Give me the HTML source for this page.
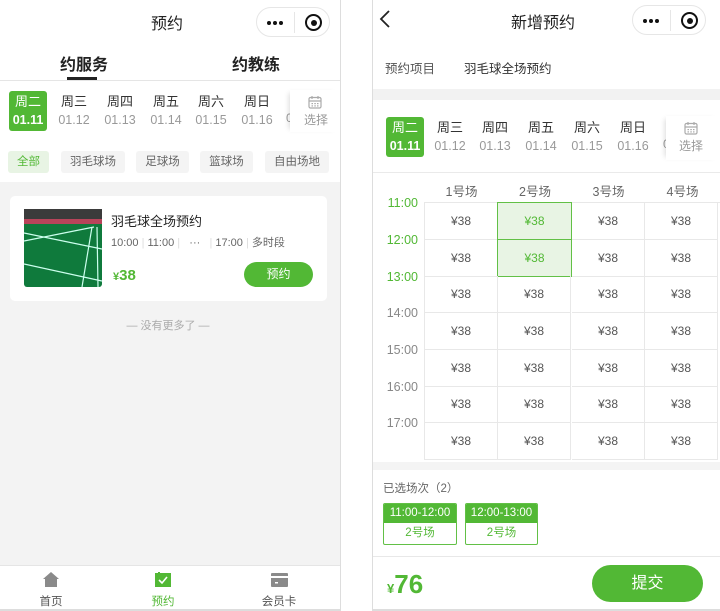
<!DOCTYPE html>
<html><head><meta charset="utf-8"><style>
*{margin:0;padding:0;box-sizing:border-box}
body{width:720px;height:611px;position:relative;background:#fff;font-family:"Liberation Sans","Noto Sans CJK SC",sans-serif;overflow:hidden;color:#333}
.a{position:absolute}
.c{text-align:center}
.cap{position:absolute;border:1px solid #e6e6e6;border-radius:16px;width:74px;height:30px;background:#fff}
.cap .dots{position:absolute;left:10px;top:13px;font-size:0}
.cap .dots i{display:inline-block;width:4px;height:4px;border-radius:2px;background:#111;margin-right:2px}
.cap .sep{position:absolute;left:37px;top:4px;width:1px;height:21px;background:#e6e6e6}
.cap .rec{position:absolute;left:48px;top:6px;width:17px;height:17px;border:2px solid #111;border-radius:50%}
.cap .rec:after{content:"";position:absolute;left:3.5px;top:3.5px;width:6px;height:6px;border-radius:50%;background:#111}
.day{position:absolute;width:38px;text-align:center;font-size:13px;color:#333;line-height:18px}
.day b{display:block;font-weight:normal;color:#999;font-size:12.5px}
.day.on{background:#52b835;color:#fff;border-radius:3px;padding:2px 0}
.day.on b{color:#fff;font-weight:bold}
.chip{position:absolute;top:151px;height:22px;line-height:22px;font-size:11.5px;color:#666;background:#f4f4f4;border-radius:3px;text-align:center}
.cell{position:absolute;width:73px;height:37px;line-height:37px;text-align:center;font-size:12px;color:#555;border-right:1px solid #e8e8e8;border-bottom:1px solid #e8e8e8}
.tm{position:absolute;left:376px;width:42px;text-align:right;font-size:12.5px;color:#888}
</style></head><body>
<!-- LEFT -->
<div class="a" style="left:340px;top:0;width:1px;height:611px;background:#ddd"></div>
<div class="a c" style="left:117px;top:10px;width:100px;font-size:16px;color:#222">预约</div>
<div class="cap" style="left:256px;top:7px"><div class="dots"><i></i><i></i><i></i></div><div class="sep"></div><div class="rec"></div></div>
<div class="a" style="left:60px;top:51px;font-size:16px;font-weight:bold;color:#222">约服务</div>
<div class="a" style="left:232px;top:51px;font-size:16px;font-weight:bold;color:#222">约教练</div>
<div class="a" style="left:67px;top:77px;width:30px;height:3px;background:#222"></div>
<div class="a" style="left:0;top:80px;width:340px;height:1px;background:#e5e5e5"></div>
<div class="day on" style="left:9px;top:91px">周二<b>01.11</b></div>
<div class="day" style="left:55px;top:93px">周三<b>01.12</b></div>
<div class="day" style="left:101px;top:93px">周四<b>01.13</b></div>
<div class="day" style="left:147px;top:93px">周五<b>01.14</b></div>
<div class="day" style="left:192px;top:93px">周六<b>01.15</b></div>
<div class="day" style="left:238px;top:93px">周日<b>01.16</b></div>
<div class="a" style="left:286px;top:111px;font-size:12px;color:#999">0</div>
<div class="a" style="left:290px;top:90px;width:50px;height:42px;background:#fff;box-shadow:-4px 0 5px -3px rgba(0,0,0,.15)"></div>
<svg class="a" style="left:308px;top:95px" width="14" height="14" viewBox="0 0 14 14"><rect x="1" y="2.5" width="12" height="10.5" rx="1.5" fill="none" stroke="#aaa" stroke-width="1.2"/><path d="M4 1v3M10 1v3M1 6h12" stroke="#aaa" stroke-width="1.2"/><g fill="#aaa"><rect x="3.5" y="8" width="1.5" height="1.2"/><rect x="6.3" y="8" width="1.5" height="1.2"/><rect x="9" y="8" width="1.5" height="1.2"/><rect x="3.5" y="10.3" width="1.5" height="1.2"/><rect x="6.3" y="10.3" width="1.5" height="1.2"/><rect x="9" y="10.3" width="1.5" height="1.2"/></g></svg>
<div class="a" style="left:304px;top:111px;font-size:12px;color:#999">选择</div>
<div class="chip" style="left:8px;width:41px;background:#e8f4e4;color:#52b835">全部</div>
<div class="chip" style="left:61px;width:64px">羽毛球场</div>
<div class="chip" style="left:136px;width:53px">足球场</div>
<div class="chip" style="left:200px;width:53px">篮球场</div>
<div class="chip" style="left:265px;width:64px">自由场地</div>
<div class="a" style="left:0;top:182px;width:340px;height:383px;background:#f3f3f3"></div>
<div class="a" style="left:10px;top:196px;width:317px;height:105px;background:#fff;border-radius:5px"></div>
<svg class="a" style="left:24px;top:209px" width="78" height="78" viewBox="0 0 78 78"><rect width="78" height="78" rx="3" fill="#0f7a3c"/><rect width="78" height="10" fill="#3b3b3b"/><rect y="10" width="78" height="5" fill="#b8445a"/><g stroke="#cfe" stroke-width="1.2" fill="none"><path d="M0 32 L70 18M0 55 L78 72M58 78 L68 18M74 78 L73 18M0 24 L78 40"/></g></svg>
<div class="a" style="left:111px;top:211px;font-size:13px;color:#222">羽毛球全场预约</div>
<div class="a" style="left:111px;top:234px;font-size:11px;color:#666;white-space:nowrap">10:00 <span style="color:#ddd">|</span> 11:00 <span style="color:#ddd">|</span> &nbsp; ··· &nbsp; <span style="color:#ddd">|</span> 17:00 <span style="color:#ddd">|</span> 多时段</div>
<div class="a" style="left:113px;top:267px;color:#52b835;font-weight:bold;font-size:15px"><span style="font-size:11px">¥</span>38</div>
<div class="a c" style="left:244px;top:262px;width:69px;height:25px;line-height:25px;border-radius:13px;background:#52b835;color:#fff;font-size:12px">预约</div>
<div class="a c" style="left:0;top:317px;width:336px;font-size:11px;color:#aaa">— 没有更多了 —</div>
<div class="a" style="left:0;top:565px;width:340px;height:1px;background:#e5e5e5"></div>
<svg class="a" style="left:43px;top:572px" width="16" height="15" viewBox="0 0 16 15"><path d="M8 0 L16 7 L14 7 L14 15 L2 15 L2 7 L0 7Z" fill="#8a8a8a"/></svg>
<div class="a c" style="left:31px;top:593px;width:40px;font-size:11.5px;color:#555">首页</div>
<svg class="a" style="left:155px;top:572px" width="16" height="15" viewBox="0 0 16 15"><rect y="1" width="16" height="14" fill="#52b835"/><rect x="3" y="0" width="2" height="3" fill="#52b835"/><path d="M4 8 L7 11 L12 5" stroke="#fff" stroke-width="1.6" fill="none"/></svg>
<div class="a c" style="left:143px;top:593px;width:40px;font-size:11.5px;color:#52b835">预约</div>
<svg class="a" style="left:271px;top:573px" width="17" height="14" viewBox="0 0 17 14"><rect width="17" height="14" rx="1" fill="#8a8a8a"/><rect y="3" width="17" height="2" fill="#fff"/><rect x="4" y="9" width="3" height="1.5" fill="#fff"/></svg>
<div class="a c" style="left:259px;top:593px;width:40px;font-size:11.5px;color:#555">会员卡</div>
<div class="a" style="left:0;top:609px;width:341px;height:2px;background:#ddd"></div>

<!-- RIGHT -->
<div class="a" style="left:372px;top:0;width:1px;height:611px;background:#ddd"></div>
<svg class="a" style="left:379px;top:10px" width="12" height="18" viewBox="0 0 12 18"><path d="M10 1 L2 9 L10 17" stroke="#222" stroke-width="1.8" fill="none"/></svg>
<div class="a c" style="left:488px;top:9px;width:110px;font-size:16px;color:#222">新增预约</div>
<div class="cap" style="left:632px;top:5px"><div class="dots"><i></i><i></i><i></i></div><div class="sep"></div><div class="rec"></div></div>
<div class="a" style="left:385px;top:58px;font-size:12.5px;color:#555">预约项目</div>
<div class="a" style="left:464px;top:58px;font-size:12.5px;color:#333">羽毛球全场预约</div>
<div class="a" style="left:373px;top:89px;width:347px;height:11px;background:#f2f2f2"></div>
<div class="day on" style="left:386px;top:117px">周二<b>01.11</b></div>
<div class="day" style="left:431px;top:119px">周三<b>01.12</b></div>
<div class="day" style="left:476px;top:119px">周四<b>01.13</b></div>
<div class="day" style="left:522px;top:119px">周五<b>01.14</b></div>
<div class="day" style="left:568px;top:119px">周六<b>01.15</b></div>
<div class="day" style="left:614px;top:119px">周日<b>01.16</b></div>
<div class="a" style="left:663px;top:137px;font-size:12px;color:#999">0</div>
<div class="a" style="left:666px;top:116px;width:54px;height:44px;background:#fff;box-shadow:-4px 0 5px -3px rgba(0,0,0,.15)"></div>
<svg class="a" style="left:684px;top:121px" width="14" height="14" viewBox="0 0 14 14"><rect x="1" y="2.5" width="12" height="10.5" rx="1.5" fill="none" stroke="#aaa" stroke-width="1.2"/><path d="M4 1v3M10 1v3M1 6h12" stroke="#aaa" stroke-width="1.2"/><g fill="#aaa"><rect x="3.5" y="8" width="1.5" height="1.2"/><rect x="6.3" y="8" width="1.5" height="1.2"/><rect x="9" y="8" width="1.5" height="1.2"/><rect x="3.5" y="10.3" width="1.5" height="1.2"/><rect x="6.3" y="10.3" width="1.5" height="1.2"/><rect x="9" y="10.3" width="1.5" height="1.2"/></g></svg>
<div class="a" style="left:679px;top:137px;font-size:12px;color:#999">选择</div>
<div class="a" style="left:373px;top:172px;width:347px;height:1px;background:#eaeaea"></div>
<div class="a c" style="left:425px;top:181px;width:73px;font-size:12.5px;color:#666">1号场</div>
<div class="a c" style="left:498px;top:181px;width:74px;font-size:12.5px;color:#666">2号场</div>
<div class="a c" style="left:572px;top:181px;width:73px;font-size:12.5px;color:#666">3号场</div>
<div class="a c" style="left:645px;top:181px;width:75px;font-size:12.5px;color:#666">4号场</div>
<div class="a" style="left:424px;top:202px;width:296px;height:258px;border-left:1px solid #e8e8e8;border-top:1px solid #e8e8e8"></div>
<div id="grid"></div>
<div class="tm" style="top:196px;color:#52b835">11:00</div>
<div class="tm" style="top:233px;color:#52b835">12:00</div>
<div class="tm" style="top:270px;color:#52b835">13:00</div>
<div class="tm" style="top:306px">14:00</div>
<div class="tm" style="top:343px">15:00</div>
<div class="tm" style="top:380px">16:00</div>
<div class="tm" style="top:416px">17:00</div>
<script>
var h='',ys=[203,240,276,313,350,386,423],xs=[425,498,572,645];
ys.forEach(function(y,r){xs.forEach(function(x,c){var s=(c==1&&r<2);h+='<div class="cell" style="left:'+x+'px;top:'+y+'px;'+(s?'background:#e8f4e4;color:#52b835;border:1px solid #62c046;left:'+(x-1)+'px;top:'+(y-1)+'px;width:75px;height:38px;line-height:36px':'')+'">¥38</div>'})});
document.getElementById('grid').outerHTML=h;
</script>
<div class="a" style="left:373px;top:462px;width:347px;height:8px;background:#f4f4f4"></div>
<div class="a" style="left:383px;top:480px;font-size:11.5px;color:#666">已选场次（2）</div>
<div class="a" style="left:383px;top:503px;width:74px;height:42px;border:1px solid #62c046;border-radius:2px;overflow:hidden"><div style="background:#52b835;color:#fff;font-size:11.5px;height:19px;line-height:19px;text-align:center">11:00-12:00</div><div style="color:#52b835;font-size:11.5px;text-align:center;line-height:21px">2号场</div></div>
<div class="a" style="left:465px;top:503px;width:73px;height:42px;border:1px solid #62c046;border-radius:2px;overflow:hidden"><div style="background:#52b835;color:#fff;font-size:11.5px;height:19px;line-height:19px;text-align:center">12:00-13:00</div><div style="color:#52b835;font-size:11.5px;text-align:center;line-height:21px">2号场</div></div>
<div class="a" style="left:373px;top:556px;width:347px;height:1px;background:#e8e8e8"></div>
<div class="a" style="left:387px;top:566px;color:#52b835;font-weight:bold;font-size:26px;line-height:36px"><span style="font-size:13px">¥</span>76</div>
<div class="a c" style="left:592px;top:565px;width:111px;height:37px;line-height:37px;border-radius:19px;background:#52b835;color:#fff;font-size:16px">提交</div>
<div class="a" style="left:372px;top:609px;width:348px;height:2px;background:#ddd"></div>
</body></html>
